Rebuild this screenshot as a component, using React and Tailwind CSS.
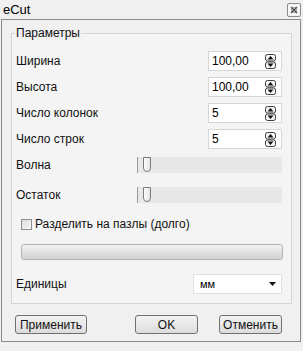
import React from "react";

function SpinArrows() {
  return (
    <svg width="11" height="15" viewBox="0 0 11 15" className="shrink-0">
      <rect x="0.5" y="0.5" width="10" height="6.5" rx="2" fill="#f4f4f4" stroke="#3c3c3c" />
      <rect x="0.5" y="8" width="10" height="6.5" rx="2" fill="#f4f4f4" stroke="#3c3c3c" />
      <path d="M2.5 5.5 L5.5 2 L8.5 5.5 Z" fill="#111" />
      <path d="M2.5 9.5 L5.5 13 L8.5 9.5 Z" fill="#111" />
    </svg>
  );
}

function SpinBox({ value }) {
  return (
    <div className="w-[74px] h-[20px] bg-white border border-[#d6d6d6] flex items-center pl-[3px] pr-[5px]">
      <span className="flex-1 text-[12px] text-black leading-none">{value}</span>
      <SpinArrows />
    </div>
  );
}

function Handle() {
  return (
    <svg width="10" height="17" viewBox="0 0 10 17" className="absolute left-[4px] top-[-1px]">
      <defs>
        <linearGradient id="hg" x1="0" x2="1" y1="0" y2="0">
          <stop offset="0" stopColor="#ffffff" />
          <stop offset="1" stopColor="#e2e2e2" />
        </linearGradient>
      </defs>
      <path d="M1.5 1.5 H8.5 V12 Q8.5 15.5 5 15.5 Q1.5 15.5 1.5 12 Z" fill="url(#hg)" stroke="#7b7b7b" />
    </svg>
  );
}

function Slider() {
  return (
    <div className="relative w-[145px] h-[16px] bg-[#e8e8e8] border-l border-[#9a9a9a]">
      <Handle />
    </div>
  );
}

function Label({ children }) {
  return <span className="text-[12px] text-[#111] leading-none">{children}</span>;
}

export default function App() {
  return (
    <div
      className="w-[303px] h-[351px] bg-[#f0f0f0] flex flex-col"
      style={{ fontFamily: '"Liberation Sans", Arial, sans-serif' }}
    >
      <div className="h-[19px] flex items-center justify-between pl-[3px] pr-[2px]">
        <span className="text-[13px] text-black leading-none">eCut</span>
        <div className="w-[14px] h-[14px] border border-[#8c8c8c] rounded-[2px] bg-[#f6f6f6] flex items-center justify-center">
          <svg width="8" height="8" viewBox="0 0 8 8">
            <path d="M1 1 L7 7 M7 1 L1 7" stroke="#444" strokeWidth="1.4" />
            <rect x="1.5" y="1.5" width="5" height="5" fill="none" stroke="#777" strokeWidth="0.6" />
          </svg>
        </div>
      </div>

      <div className="ml-[1px] w-[300px] h-[323px] border border-[#8a8a8a] bg-[#f0f0f0] flex flex-col">
        <div className="relative ml-[9px] mt-[13px] w-[281px] h-[271px] border border-[#d5d5d5] bg-[#f4f4f4] flex flex-col pl-[4px] pr-[9px]">
          <span className="absolute left-[3px] top-[-7px] px-[1px] bg-[#f0f0f0] text-[12px] text-[#111] leading-none">
            Параметры
          </span>

          <div className="mt-[17px] h-[20px] flex items-center justify-between">
            <Label>Ширина</Label>
            <SpinBox value="100,00" />
          </div>
          <div className="mt-[6px] h-[20px] flex items-center justify-between">
            <Label>Высота</Label>
            <SpinBox value="100,00" />
          </div>
          <div className="mt-[6px] h-[20px] flex items-center justify-between">
            <Label>Число колонок</Label>
            <SpinBox value="5" />
          </div>
          <div className="mt-[6px] h-[20px] flex items-center justify-between">
            <Label>Число строк</Label>
            <SpinBox value="5" />
          </div>

          <div className="mt-[8px] h-[16px] flex items-center justify-between">
            <Label>Волна</Label>
            <Slider />
          </div>
          <div className="mt-[14px] h-[16px] flex items-center justify-between">
            <Label>Остаток</Label>
            <Slider />
          </div>

          <div className="mt-[15px] h-[12px] flex items-center pl-[5px]">
            <div className="w-[11px] h-[11px] border border-[#8e8e8e] bg-gradient-to-br from-[#dcdcdc] to-[#f8f8f8]" />
            <span className="ml-[3px] text-[12px] text-[#111] leading-none">Разделить на пазлы (долго)</span>
          </div>

          <div className="mt-[14px] ml-[5px] w-[262px] h-[16px] rounded-[3px] border border-[#b4b4b4] bg-gradient-to-b from-[#f2f2f2] via-[#e2e2e2] to-[#d2d2d2]" />

          <div className="mt-[14px] h-[20px] flex items-center justify-between">
            <Label>Единицы</Label>
            <div className="w-[89px] h-[20px] bg-white border border-[#e0e0e0] flex items-center justify-between pl-[6px] pr-[5px]">
              <span className="text-[11px] text-black leading-none">мм</span>
              <svg width="7" height="4" viewBox="0 0 7 4">
                <path d="M0 0 H7 L3.5 4 Z" fill="#111" />
              </svg>
            </div>
          </div>
        </div>

        <div className="mt-[11px] ml-[13px] flex items-center">
          <button className="w-[72px] h-[19px] rounded-[3px] border border-[#707070] bg-gradient-to-b from-[#f3f3f3] to-[#dcdcdc] text-[12px] text-[#111] leading-none">
            Применить
          </button>
          <button className="ml-[48px] w-[63px] h-[19px] rounded-[3px] border border-[#707070] bg-gradient-to-b from-[#f3f3f3] to-[#dcdcdc] text-[12px] text-[#111] leading-none">
            OK
          </button>
          <button className="ml-[21px] w-[63px] h-[19px] rounded-[3px] border border-[#707070] bg-gradient-to-b from-[#f3f3f3] to-[#dcdcdc] text-[12px] text-[#111] leading-none">
            Отменить
          </button>
        </div>
      </div>
    </div>
  );
}
